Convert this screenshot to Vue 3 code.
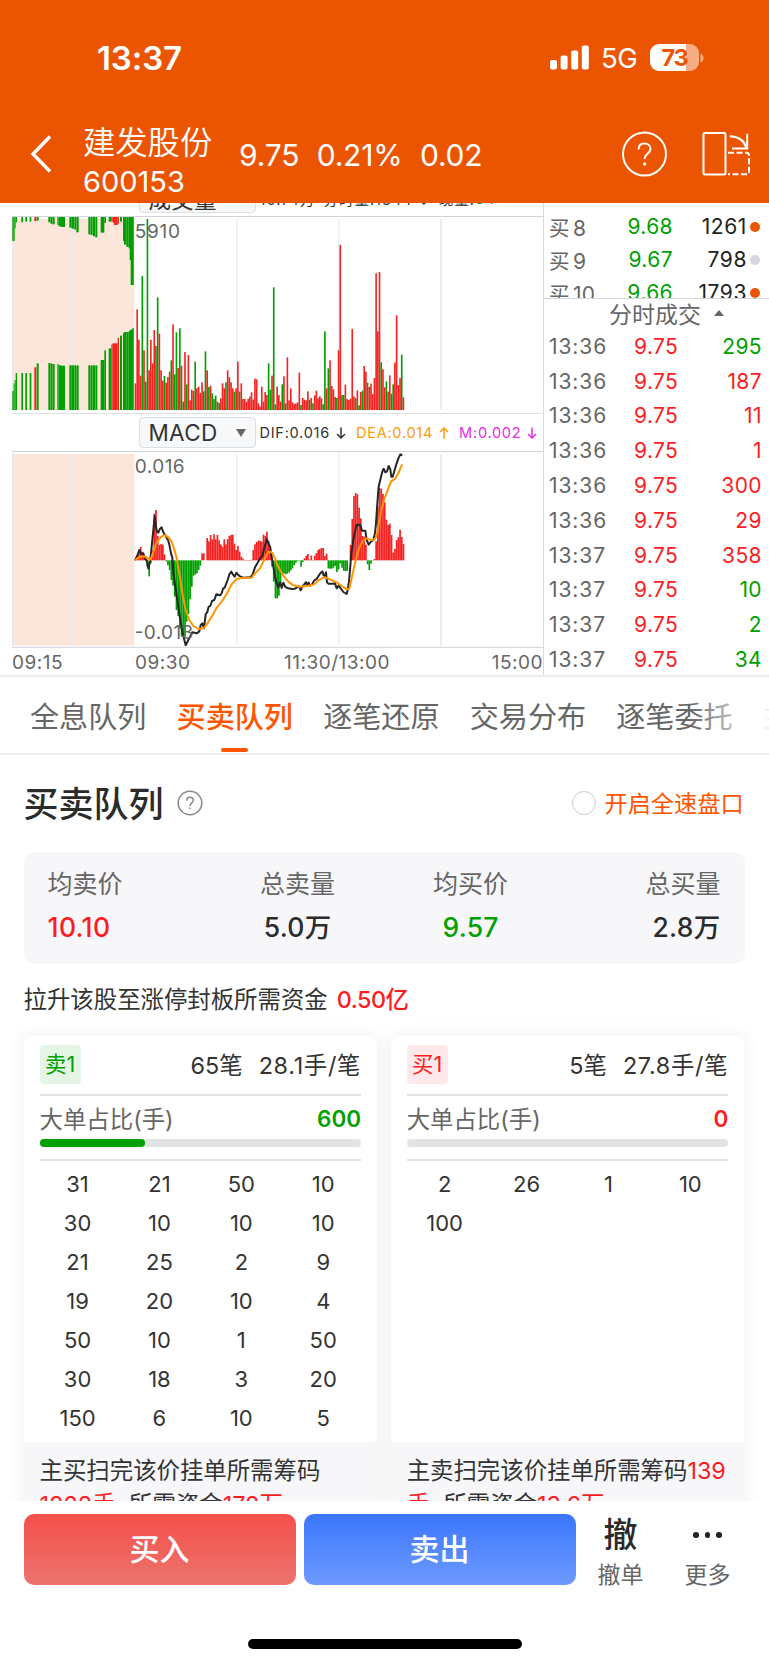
<script setup>
import { computed, ref } from 'vue'

// one slot per trading minute, canvas drawn at 3x
const SLOT = 5.12
const START_X = 405
const VOLUME_BASE = 645
const MACD_BASE = 451

const volumeTops = 'r565 r343 r434 r542 g243 r466 g560 g72 r526 r434 r505 r405 g453 g307 r416 r526 r557 g543 r563 r546 r530 g496 r388 g538 g412 r519 g400 r512 g620 r471 g568 r480 r616 r584 r588 g500 r580 r575 r594 r562 g589 g469 r526 g576 r572 g595 g612 g602 r620 g624 r610 r565 r580 g562 r526 r547 r562 r580 g590 r580 r500 g590 r565 r612 r612 r620 r612 r605 r592 r614 r551 r553 r625 r635 r575 r620 r591 r600 g505 g584 r542 g277 g628 r575 r600 r620 g568 r544 g625 r487 r616 r580 r622 r626 r626 r622 r533 g630 r609 r614 r616 r589 g614 r609 g625 r601 r587 r610 r604 r610 g628 g409 r580 g520 r496 r573 r583 r606 g609 r466 r150 g600 g600 r569 r612 r615 r611 r402 r604 g609 r586 g631 r591 g587 r513 r530 g563 r576 r566 r597 r549 r235 r409 r231 g502 r523 r577 g559 r590 r541 g596 g568 r503 r361 r570 r549 g479 r607'

const macdTops = [
  449, 436, 424, 411, 425, 437, 444, 470, 499, 460, 420, 311, 300, 378, 405, 402, 404, 433, 454, 466,
  480, 510, 527, 560, 600, 618, 655, 680, 680, 680, 635, 612, 568, 530, 497, 494, 490, 480, 467, 430,
  430, 451, 384, 394, 375, 388, 373, 388, 375, 391, 403, 410, 388, 403, 387, 378, 375, 374, 401, 420,
  408, 425, 440, 446, 450, 450, 450, 450, 449, 420, 403, 396, 392, 392, 395, 374, 378, 365, 392, 410,
  470, 515, 565, 565, 557, 525, 495, 490, 493, 491, 487, 481, 475, 465, 458, 453, 452, 470, 456, 445,
  437, 432, 449, 437, 452, 437, 429, 420, 417, 414, 414, 438, 431, 475, 476, 476, 473, 468, 486, 478,
  460, 473, 482, 483, 483, 451, 405, 327, 258, 249, 253, 293, 325, 378, 380, 404, 463, 480, 461, 452,
  447, 394, 290, 234, 236, 252, 277, 329, 345, 341, 375, 428, 417, 390, 382, 359, 381, 402
]

const volumeBars = computed(() => volumeTops.split(' ').map((item, i) => {
  const y = Number(item.slice(1))
  return { x: START_X - 1 + i * SLOT, y, h: VOLUME_BASE - y, up: item[0] === 'r' }
}))

const macdBars = computed(() => macdTops.map((top, i) => ({
  x: START_X - 1 + i * SLOT,
  y: Math.min(top, MACD_BASE),
  h: Math.abs(top - MACD_BASE),
  up: top < MACD_BASE
})))

// call auction: [x, width, bottom of the hanging bar, top of the standing bar, up]
const auctionBars = [
  [37, 4, 138, 588], [41, 3, 138, 565], [44, 3, 100, 555], [47, 4, 82, 534],
  [64, 5, 82, 534], [76, 5, 80, 534], [89, 5, 80, 534],
  [103, 6, 78, 517, 1], [110, 6, 77, 505],
  [145, 5, 82, 504], [151, 5, 86, 505], [157, 7, 88, 507],
  [172, 4, 90, 507], [176, 7, 94, 511], [183, 12, 96, 512],
  [208, 7, 98, 511], [215, 7, 101, 511], [223, 5, 104, 511], [229, 7, 112, 511],
  [265, 5, 118, 511], [271, 7, 120, 511], [279, 6, 124, 511], [286, 6, 127, 511],
  [302, 11, 113, 495], [313, 5, 84, 466],
  [326, 8, 80, 460], [334, 4, 80, 448, 1], [338, 4, 83, 445, 1], [342, 11, 90, 445, 1], [353, 4, 86, 428, 1],
  [360, 6, 80, 422], [369, 3, 138, 414], [372, 7, 149, 411], [379, 7, 156, 411],
  [386, 4, 160, 409], [389, 4, 195, 405], [392, 8, 270, 404], [397, 4, 270, 399]
]

const difLine = '405,451 413,434 418,420 424,432 430,430 434,445 440,452 445,476 450,455 453,430 458,380 461,350 464,318 468,350 471,365 475,368 480,356 485,352 488,362 493,372 497,377 500,384 504,390 508,404 513,430 517,443 520,490 526,530 533,577 540,625 548,670 557,706 565,690 577,667 590,670 598,664 602,645 607,640 612,655 617,613 622,606 626,590 631,588 636,573 643,570 649,553 660,556 665,550 669,536 674,533 683,510 688,493 694,485 699,494 704,500 709,488 714,494 720,499 730,503 750,502 757,496 765,472 773,458 780,445 787,438 793,413 797,400 800,388 804,397 810,410 815,440 820,470 825,500 830,520 835,532 840,517 845,534 850,518 856,531 865,535 875,537 885,536 894,530 898,530 902,541 907,530 912,524 918,516 921,526 926,518 930,527 936,524 942,512 950,507 958,494 963,488 967,484 971,496 975,498 978,487 981,517 985,521 1000,521 1005,520 1010,535 1016,526 1022,535 1030,546 1040,552 1043,540 1047,515 1050,480 1054,430 1060,390 1065,365 1070,344 1080,344 1086,362 1096,362 1100,390 1106,404 1112,396 1120,390 1125,370 1128,340 1132,280 1136,230 1142,205 1147,185 1151,176 1156,187 1161,184 1166,168 1171,178 1174,200 1178,200 1184,180 1190,160 1196,143 1201,133 1207,136'

const deaLine = '405,451 415,443 425,439 437,440 448,450 453,445 460,425 468,402 478,386 487,378 496,376 505,382 515,395 522,415 530,445 538,490 548,555 557,600 568,630 580,648 595,657 612,654 622,640 635,620 650,593 665,575 680,551 695,523 710,507 725,504 755,503 765,490 780,475 790,455 797,440 805,427 812,425 818,430 825,445 832,465 840,480 852,500 865,515 880,526 900,530 920,528 940,524 955,512 967,504 975,502 990,508 1010,517 1025,528 1040,538 1048,536 1055,505 1065,460 1077,415 1088,394 1097,385 1110,389 1120,391 1127,383 1133,360 1142,310 1152,270 1163,240 1174,213 1185,207 1195,190 1203,170 1207,163'

const orders = [
  { level: 8, price: '9.68', qty: 1261, hot: true },
  { level: 9, price: '9.67', qty: 798, hot: false },
  { level: 10, price: '9.66', qty: 1793, hot: true }
]

const trades = [
  { time: '13:36', qty: 295, up: false },
  { time: '13:36', qty: 187, up: true },
  { time: '13:36', qty: 11, up: true },
  { time: '13:36', qty: 1, up: true },
  { time: '13:36', qty: 300, up: true },
  { time: '13:36', qty: 29, up: true },
  { time: '13:37', qty: 358, up: true },
  { time: '13:37', qty: 10, up: false },
  { time: '13:37', qty: 2, up: false },
  { time: '13:37', qty: 34, up: false }
]

const tabs = ['全息队列', '买卖队列', '逐笔还原', '交易分布', '逐笔委托', '主力']
const activeTab = ref(1)

const stats = [
  { label: '均卖价', value: '10.10', cls: 'red left' },
  { label: '总卖量', value: '5.0万', cls: '' },
  { label: '均买价', value: '9.57', cls: 'green' },
  { label: '总买量', value: '2.8万', cls: 'right' }
]

const queues = [
  {
    side: 'sell', name: '卖1', count: '65笔', avg: '28.1手/笔', big: 600, ratio: 32.8,
    cells: [31, 21, 50, 10, 30, 10, 10, 10, 21, 25, 2, 9, 19, 20, 10, 4, 50, 10, 1, 50, 30, 18, 3, 20, 150, 6, 10, 5],
    tip: '主买扫完该价挂单所需筹码', need: '1828手', money: '178万'
  },
  {
    side: 'buy', name: '买1', count: '5笔', avg: '27.8手/笔', big: 0, ratio: 0,
    cells: [2, 26, 1, 10, 100],
    tip: '主卖扫完该价挂单所需筹码', need: '139手', money: '13.6万'
  }
]
</script>

<template>
  <div class="page">
    <header class="header">
      <div class="status">
        <span class="clock">13:37</span>
        <div class="status-right">
          <svg class="signal" width="39" height="25" viewBox="0 0 39 25">
            <rect x="0" y="15" width="7" height="9.5" rx="2" />
            <rect x="10.6" y="10.5" width="7" height="14" rx="2" />
            <rect x="21.2" y="5.5" width="7" height="19" rx="2" />
            <rect x="31.8" y="0.5" width="7" height="24" rx="2" />
          </svg>
          <span class="net">5G</span>
          <div class="battery"><span>73</span></div>
          <svg class="nub" width="4" height="10" viewBox="0 0 4 10"><path d="M0.5 0.5Q3.5 2 3.5 5T0.5 9.5Z" /></svg>
        </div>
      </div>
      <div class="nav">
        <svg class="back" width="22" height="38" viewBox="0 0 22 38"><path d="M20 1.5L3 19L20 36.5" /></svg>
        <div class="stock">
          <span class="stock-name">建发股份</span>
          <span class="stock-code">600153</span>
        </div>
        <div class="quote"><span>9.75</span><span>0.21%</span><span>0.02</span></div>
        <svg class="help" width="46" height="46" viewBox="0 0 46 46">
          <circle cx="22.5" cy="23" r="21.5" />
          <path d="M16.500 18.5C16.500 14.5 19.1 12.4 22.5 12.4S28.500 14.6 28.500 18C28.500 22.4 22.6 22.8 22.6 28" />
          <circle class="dot" cx="22.6" cy="33" r="1.7" />
        </svg>
        <svg class="rotate" width="50" height="46" viewBox="0 0 50 46">
          <rect x="1.500" y="2" width="22" height="41.5" rx="1.5" />
          <path d="M27.700 5.200Q41.500 6 44.200 16.500M45.200 2.800V17.500H30" />
          <path d="M26 21.8H44.500Q47 21.8 47 24.300V41Q47 43.3 44.500 43.3H26" stroke-dasharray="6 2.500" />
        </svg>
      </div>
    </header>

    <section class="market">
      <div class="charts">
        <div class="indicator-window">
          <div class="indicator">
            <div class="picker"><span>成交量</span></div>
            <span class="legend dif">10.74万</span>
            <span class="legend dif">分时量:1844 ↓</span>
            <span class="legend dif">现量:<b class="green">34</b></span>
          </div>
        </div>
        <svg class="canvas volume" viewBox="0 63 1632 594">
          <rect x="37" y="72" width="366" height="573" class="auction" />
          <path d="M218.500 72V645" class="grid wide" />
          <path d="M710.500 72V645M1016.500 72V645" class="grid" />
          <path d="M1323 72V645" class="grid wide" />
          <path d="M38 66V645" class="grid" />
          <path d="M36 64.500H1632" class="frame" />
          <path d="M36 655.500H1632" class="frame thin" />
          <g v-for="(b, i) in auctionBars" :key="'a' + i" :class="b[4] ? 'up' : 'down'">
            <rect :x="b[0]" y="66" :width="b[1]" :height="b[2] - 66" />
            <rect :x="b[0]" :y="b[3]" :width="b[1]" :height="645 - b[3]" />
          </g>
          <rect v-for="(b, i) in volumeBars" :key="i" :x="b.x" :y="b.y" width="4.9" :height="b.h" :class="b.up ? 'up' : 'down'" />
          <text x="404" y="130" textLength="136">5910</text>
        </svg>
        <div class="indicator">
          <div class="picker"><span>MACD</span><i></i></div>
          <span class="legend dif">DIF:0.016<svg width="10" height="12" viewBox="0 0 10 12"><path d="M5 0.500V11M1 7L5 11L9 7" /></svg></span>
          <span class="legend dea">DEA:0.014<svg width="10" height="12" viewBox="0 0 10 12"><path d="M5 11.500V1M1 5L5 1L9 5" /></svg></span>
          <span class="legend m">M:0.002<svg width="10" height="12" viewBox="0 0 10 12"><path d="M5 0.500V11M1 7L5 11L9 7" /></svg></span>
        </div>
        <svg class="canvas macd" viewBox="0 123 1632 591">
          <rect x="37" y="132" width="366" height="575" class="auction" />
          <path d="M218.500 132V707" class="grid wide" />
          <path d="M710.500 132V707M1016.500 132V707" class="grid" />
          <path d="M1323 132V707" class="grid wide" />
          <path d="M38 126V711" class="grid" />
          <path d="M36 124.500H1632M36 712H1632" class="frame" />
          <rect v-for="(b, i) in macdBars" :key="i" :x="b.x" :y="b.y" width="5.12" :height="b.h" :class="b.up ? 'up' : 'down'" />
          <polyline :points="difLine" class="line dif-line" />
          <polyline :points="deaLine" class="line dea-line" />
          <text x="404" y="189" textLength="150">0.016</text>
          <text x="404" y="687" textLength="176">-0.013</text>
        </svg>
        <div class="axis">
          <span>09:15</span><span>09:30</span><span>11:30/13:00</span><span>15:00</span>
        </div>
      </div>

      <div class="book">
        <div class="orders">
          <div v-for="o in orders" :key="o.level" class="order">
            <span class="level"><em>买</em>{{ o.level }}</span>
            <span class="order-price">{{ o.price }}</span>
            <span class="order-qty">{{ o.qty }}</span>
            <i :class="{ hot: o.hot }"></i>
          </div>
        </div>
        <div class="trade-head">分时成交<i></i></div>
        <div v-for="(t, i) in trades" :key="i" class="trade">
          <span class="time">{{ t.time }}</span>
          <span class="trade-price">9.75</span>
          <span class="trade-qty" :class="t.up ? 'red' : 'green'">{{ t.qty }}</span>
        </div>
      </div>
    </section>

    <nav class="tabs">
      <span v-for="(tab, i) in tabs" :key="tab" class="tab" :class="{ active: i === activeTab }" @click="activeTab = i">{{ tab }}</span>
    </nav>

    <main class="content">
      <div class="title-row">
        <h1>买卖队列</h1>
        <svg class="tip-icon" width="26" height="26" viewBox="0 0 26 26">
          <circle cx="13" cy="13" r="11.8" />
          <path d="M9.700 10.700C9.700 8.400 11.100 7.200 13 7.200S16.300 8.400 16.300 10.300C16.300 12.800 13 13 13 16" />
          <path d="M13 17.600V19.300" />
        </svg>
        <span class="radio"></span>
        <span class="radio-text">开启全速盘口</span>
      </div>

      <div class="stats">
        <div v-for="s in stats" :key="s.label" class="stat" :class="s.cls">
          <label>{{ s.label }}</label>
          <strong>{{ s.value }}</strong>
        </div>
      </div>

      <p class="notice">拉升该股至涨停封板所需资金<b class="red">0.50亿</b></p>

      <div class="queues">
        <div v-for="q in queues" :key="q.side" class="card" :class="q.side">
          <div class="card-head">
            <span class="badge">{{ q.name }}</span>
            <span class="count">{{ q.count }}</span>
            <span class="avg">{{ q.avg }}</span>
          </div>
          <div class="big-order">
            <div class="big-text"><span>大单占比(手)</span><b>{{ q.big }}</b></div>
            <div class="track"><div class="fill" :style="{ width: q.ratio + '%' }"></div></div>
          </div>
          <div class="cells">
            <span v-for="(c, i) in q.cells" :key="i">{{ c }}</span>
          </div>
          <div class="card-foot">{{ q.tip }}<span class="red">{{ q.need }}</span><span class="comma">，</span>所需资金<span class="red">{{ q.money }}</span></div>
        </div>
      </div>
    </main>

    <footer class="actions">
      <button class="btn buy-btn">买入</button>
      <button class="btn sell-btn">卖出</button>
      <div class="action"><span class="cancel">撤</span><span>撤单</span></div>
      <div class="action more"><span class="dots"><i></i><i></i><i></i></span><span>更多</span></div>
    </footer>
    <div class="home"><span></span></div>
  </div>
</template>

<style>
body {
  margin: 0;
  background: #fff;
}
</style>

<style scoped>
.page {
  width: 769px;
  height: 1665px;
  overflow: hidden;
  display: flex;
  flex-direction: column;
  background: #fff;
  color: #333;
  font-family: Inter, "Noto Sans CJK SC", sans-serif;
}
.page * {
  box-sizing: border-box;
}
.red { color: #fb1d1f; }
.green { color: #00a000; }

.header {
  height: 203px;
  flex: none;
  background: #eb5502;
  color: #fff;
}
.status {
  height: 115px;
  padding: 0 65px 0 97px;
  display: flex;
  justify-content: space-between;
  align-items: center;
}
.clock {
  font-size: 33px;
  font-weight: 600;
  letter-spacing: -0.1px;
}
.status-right {
  display: flex;
  align-items: center;
}
.signal { fill: #fff; }
.net {
  margin-left: 12px;
  width: 49px;
  font-size: 27.5px;
  letter-spacing: -0.5px;
}
.battery {
  width: 49px;
  height: 27px;
  border-radius: 9px;
  background: linear-gradient(90deg, #fff 73%, #f6ad84 73%);
  color: #eb5502;
  font-size: 23.5px;
  font-weight: 700;
  line-height: 27px;
  text-align: center;
  letter-spacing: -1.2px;
}
.nub { fill: #f6ad84; margin-left: 1px; }

.nav {
  height: 88px;
  padding: 0 17px 0 30px;
  display: flex;
  align-items: center;
}
.back {
  margin-top: -10px;
  fill: none;
  stroke: #fff;
  stroke-width: 3.4;
}
.stock {
  margin-left: 31px;
  width: 156px;
  padding-top: 3px;
  display: flex;
  flex-direction: column;
}
.stock-name {
  font-size: 32.3px;
  line-height: 42px;
  font-weight: 350;
}
.stock-code {
  font-size: 29px;
  line-height: 36px;
}
.quote {
  display: flex;
  flex: 1;
  gap: 17.5px;
  margin-top: -8px;
  font-size: 30px;
  line-height: 40px;
  letter-spacing: -0.2px;
}
.help, .rotate {
  margin-top: -10px;
  fill: none;
  stroke: #fff;
  stroke-width: 2;
}
.help .dot { fill: #fff; stroke: none; }
.rotate { margin-left: 34px; }

.market {
  height: 474px;
  flex: none;
  display: flex;
  border-bottom: 2px solid #ececf0;
}
.charts {
  width: 544px;
  display: flex;
  flex-direction: column;
  border-right: 1.500px solid #d8dae2;
}
.indicator-window {
  height: 13px;
  flex: none;
  overflow: hidden;
  display: flex;
  align-items: flex-end;
}
.indicator-window .legend {
  padding-top: 2px;
  letter-spacing: 1px;
  margin-right: 8px;
}
.indicator {
  flex: none;
  height: 37px;
  padding-left: 138.500px;
  display: flex;
  align-items: center;
  white-space: nowrap;
}
.picker {
  width: 117px;
  height: 31px;
  flex: none;
  margin-right: 4px;
  padding: 0 9px 0 9px;
  display: flex;
  align-items: center;
  justify-content: space-between;
  border: 1px solid #dcdfe4;
  border-radius: 4px;
  background: #f7f8fa;
  font-size: 22.5px;
  letter-spacing: 0.3px;
}
.picker i {
  border: 5px solid transparent;
  border-top: 8px solid #666;
  border-bottom: 0;
}
.legend {
  flex: none;
  display: flex;
  align-items: center;
  font-size: 14.5px;
  letter-spacing: 0.75px;
  margin-right: 10px;
}
.legend b { font-weight: 400; }
.legend svg {
  margin-left: 6px;
  fill: none;
  stroke: currentColor;
  stroke-width: 1.500;
}
.dif { color: #333; }
.dea { color: #ff9a0a; }
.m { color: #e62be6; }
.canvas {
  display: block;
  width: 544px;
  flex: none;
}
.volume { height: 198px; }
.macd { height: 197px; }
.auction { fill: #fce6da; }
.grid { stroke: #e1e5ee; stroke-width: 3; }
.wide { stroke: #e8eaef; stroke-width: 5; }
.frame { stroke: #d0d3db; stroke-width: 3; }
.thin { stroke: #dfe1e6; }
.up { fill: #f52222; }
.down { fill: #00a000; }
.line {
  fill: none;
  stroke-width: 6;
  stroke-linejoin: round;
}
.dif-line { stroke: #262626; }
.dea-line { stroke: #ff9500; }
.canvas text {
  font-size: 57px;
  fill: #666;
}
.axis {
  height: 27px;
  flex: none;
  display: grid;
  grid-template-columns: 123px 149px 1fr auto;
  padding: 1px 0 0 12px;
  align-items: center;
  color: #666;
  font-size: 19px;
  letter-spacing: 0.5px;
}

.book {
  flex: 1;
  color: #666;
  font-size: 21px;
  letter-spacing: 0.4px;
}
.orders {
  height: 96px;
  padding-top: 7px;
  overflow: hidden;
  border-bottom: 1.500px solid #d5d7de;
}
.order {
  height: 33px;
  padding: 0 9px 0 5px;
  display: flex;
  align-items: center;
}
.level { width: 60px; }
.level em {
  margin-right: 3px;
  font-style: normal;
  font-size: 20.5px;
}
.order-price {
  width: 64px;
  text-align: right;
  color: #00a000;
}
.order-qty {
  flex: 1;
  text-align: right;
  color: #222;
  letter-spacing: 0.6px;
}
.order i {
  width: 10px;
  height: 10px;
  margin-left: 3px;
  border-radius: 50%;
  background: #d5d7de;
}
.order i.hot { background: #eb5502; }
.trade-head {
  height: 28px;
  margin-bottom: 2px;
  padding-left: 65px;
  display: flex;
  align-items: center;
  font-size: 23px;
  letter-spacing: 0;
}
.trade-head i {
  margin-left: 13px;
  border: 5px solid transparent;
  border-bottom: 6px solid #666;
  border-top: 0;
}
.trade {
  height: 34.8px;
  padding: 0 7px 0 5px;
  display: flex;
  align-items: center;
}
.time {
  width: 85px;
  letter-spacing: 0.9px;
}
.trade-price { color: #fb1d1f; }
.trade-qty {
  flex: 1;
  text-align: right;
}

.tabs {
  height: 78px;
  flex: none;
  padding-left: 30px;
  display: flex;
  gap: 30.2px;
  overflow: hidden;
  position: relative;
  border-bottom: 2px solid #ececec;
  color: #666;
  font-size: 29.1px;
  line-height: 81px;
}
.tabs::after {
  content: '';
  position: absolute;
  right: 0;
  top: 0;
  width: 80px;
  height: 76px;
  background: linear-gradient(90deg, rgba(255, 255, 255, 0), rgba(255, 255, 255, 0.9) 85%);
}
.tab {
  flex: none;
  position: relative;
}
.active {
  color: #ff5500;
  font-weight: 500;
}
.active::after {
  content: '';
  position: absolute;
  left: 50%;
  top: 71px;
  width: 27px;
  height: 4px;
  margin-left: -13.5px;
  border-radius: 2px;
  background: #ff5500;
}

.content {
  height: 746px;
  flex: none;
  padding: 0 24.4px 0 23.6px;
  overflow: hidden;
}
.title-row {
  height: 97px;
  padding-bottom: 1px;
  display: flex;
  align-items: center;
}
h1 {
  margin: -3px 0 0;
  font-size: 35px;
  font-weight: 500;
  color: #2b2b2b;
}
.tip-icon {
  margin-left: 13px;
  fill: none;
  stroke: #888;
  stroke-width: 1.500;
}
.radio {
  width: 24px;
  height: 24px;
  margin-left: auto;
  border: 1.500px solid #ccc;
  border-radius: 50%;
}
.radio-text {
  margin: -2px 1px 0 8px;
  color: #ff5500;
  font-size: 23.2px;
}
.stats {
  height: 112px;
  padding: 0 24px 3px;
  display: flex;
  align-items: center;
  justify-content: space-between;
  border-radius: 10px;
  background: #f7f7fa;
}
.stat {
  width: 76px;
  display: flex;
  flex-direction: column;
  align-items: center;
}
.stat:nth-child(2) { margin-right: -39px; }
.stat label {
  font-size: 25px;
  line-height: 42px;
  color: #666;
}
.stat strong {
  font-size: 26.5px;
  line-height: 45px;
  font-weight: 500;
  letter-spacing: 0.3px;
  white-space: nowrap;
}
.stat:nth-child(even) strong { color: #2b2b2b; }
.left { align-items: flex-start; }
.right { align-items: flex-end; }
.notice {
  margin: 0;
  height: 72px;
  line-height: 72px;
  font-size: 23.4px;
}
.notice b {
  margin-left: 9px;
  font-weight: 500;
  letter-spacing: -0.5px;
}
.queues {
  display: flex;
  gap: 13.500px;
}
.card {
  width: 353.6px;
  height: 500px;
  display: flex;
  flex-direction: column;
  border-radius: 8px;
  background: #fff;
  box-shadow: 0 0 20px rgba(0, 0, 0, 0.07);
  font-size: 23.4px;
}
.card-head {
  height: 60px;
  margin: 0 16px;
  padding-bottom: 1px;
  display: flex;
  align-items: center;
  border-bottom: 2px solid #e2e2e2;
}
.badge {
  width: 41px;
  height: 39px;
  border-radius: 4px;
  font-size: 21.5px;
  line-height: 38px;
  text-align: center;
}
.sell .badge { color: #00a000; background: #e4f5e5; }
.buy .badge { color: #fb1d1f; background: #ffe8e9; }
.count { margin-left: auto; }
.count, .avg { margin-top: -2px; }
.avg {
  margin-left: 16px;
  letter-spacing: 0.7px;
}
.big-order {
  height: 65px;
  margin: 0 16px;
  border-bottom: 2px solid #e2e2e2;
}
.big-text {
  height: 43px;
  display: flex;
  align-items: center;
  justify-content: space-between;
  color: #666;
}
.big-text b {
  padding-top: 2px;
  font-size: 22.5px;
  font-weight: 600;
  color: #00a000;
}
.buy .big-text b { color: #fb1d1f; }
.track {
  height: 8px;
  border-radius: 4px;
  background: #e3e3e3;
}
.fill {
  height: 8px;
  border-radius: 4px;
  background: #00a000;
}
.cells {
  height: 281px;
  padding: 3px 13px 0;
  display: grid;
  grid-template-columns: repeat(4, 1fr);
  grid-auto-rows: 39.1px;
  align-content: start;
  align-items: center;
  text-align: center;
  font-size: 22px;
}
.card-foot {
  flex: 1;
  padding: 12px 12px 0 16px;
  background: #f7f7fa;
  line-height: 34px;
}
.comma { letter-spacing: -10px; }

.actions {
  height: 98px;
  flex: none;
  padding: 13px 24px 0 23.6px;
  display: flex;
}
.btn {
  width: 272px;
  height: 71px;
  margin-right: 8px;
  padding: 0 0 5px;
  border: 0;
  border-radius: 10px;
  color: #fff;
  font-family: inherit;
  font-size: 30px;
  font-weight: 500;
}
.buy-btn { background: linear-gradient(#f5504a, #ec736d); }
.sell-btn { background: linear-gradient(#3a76fb, #6e9aff); }
.action {
  width: 60px;
  margin-left: 7px;
  display: flex;
  flex-direction: column;
  align-items: center;
  color: #666;
  font-size: 23px;
  line-height: 42px;
}
.more { margin-left: 27px; }
.cancel {
  height: 40px;
  line-height: 41px;
  font-size: 34px;
  font-weight: 500;
  color: #2b2b2b;
}
.dots {
  height: 40px;
  padding-top: 2px;
  display: flex;
  align-items: center;
  gap: 6px;
}
.dots i {
  width: 5.500px;
  height: 5.500px;
  border-radius: 50%;
  background: #222;
}
.home {
  flex: 1;
  padding-top: 40px;
  display: flex;
  justify-content: center;
}
.home span {
  width: 274px;
  height: 10px;
  border-radius: 5px;
  background: #000;
}
</style>
